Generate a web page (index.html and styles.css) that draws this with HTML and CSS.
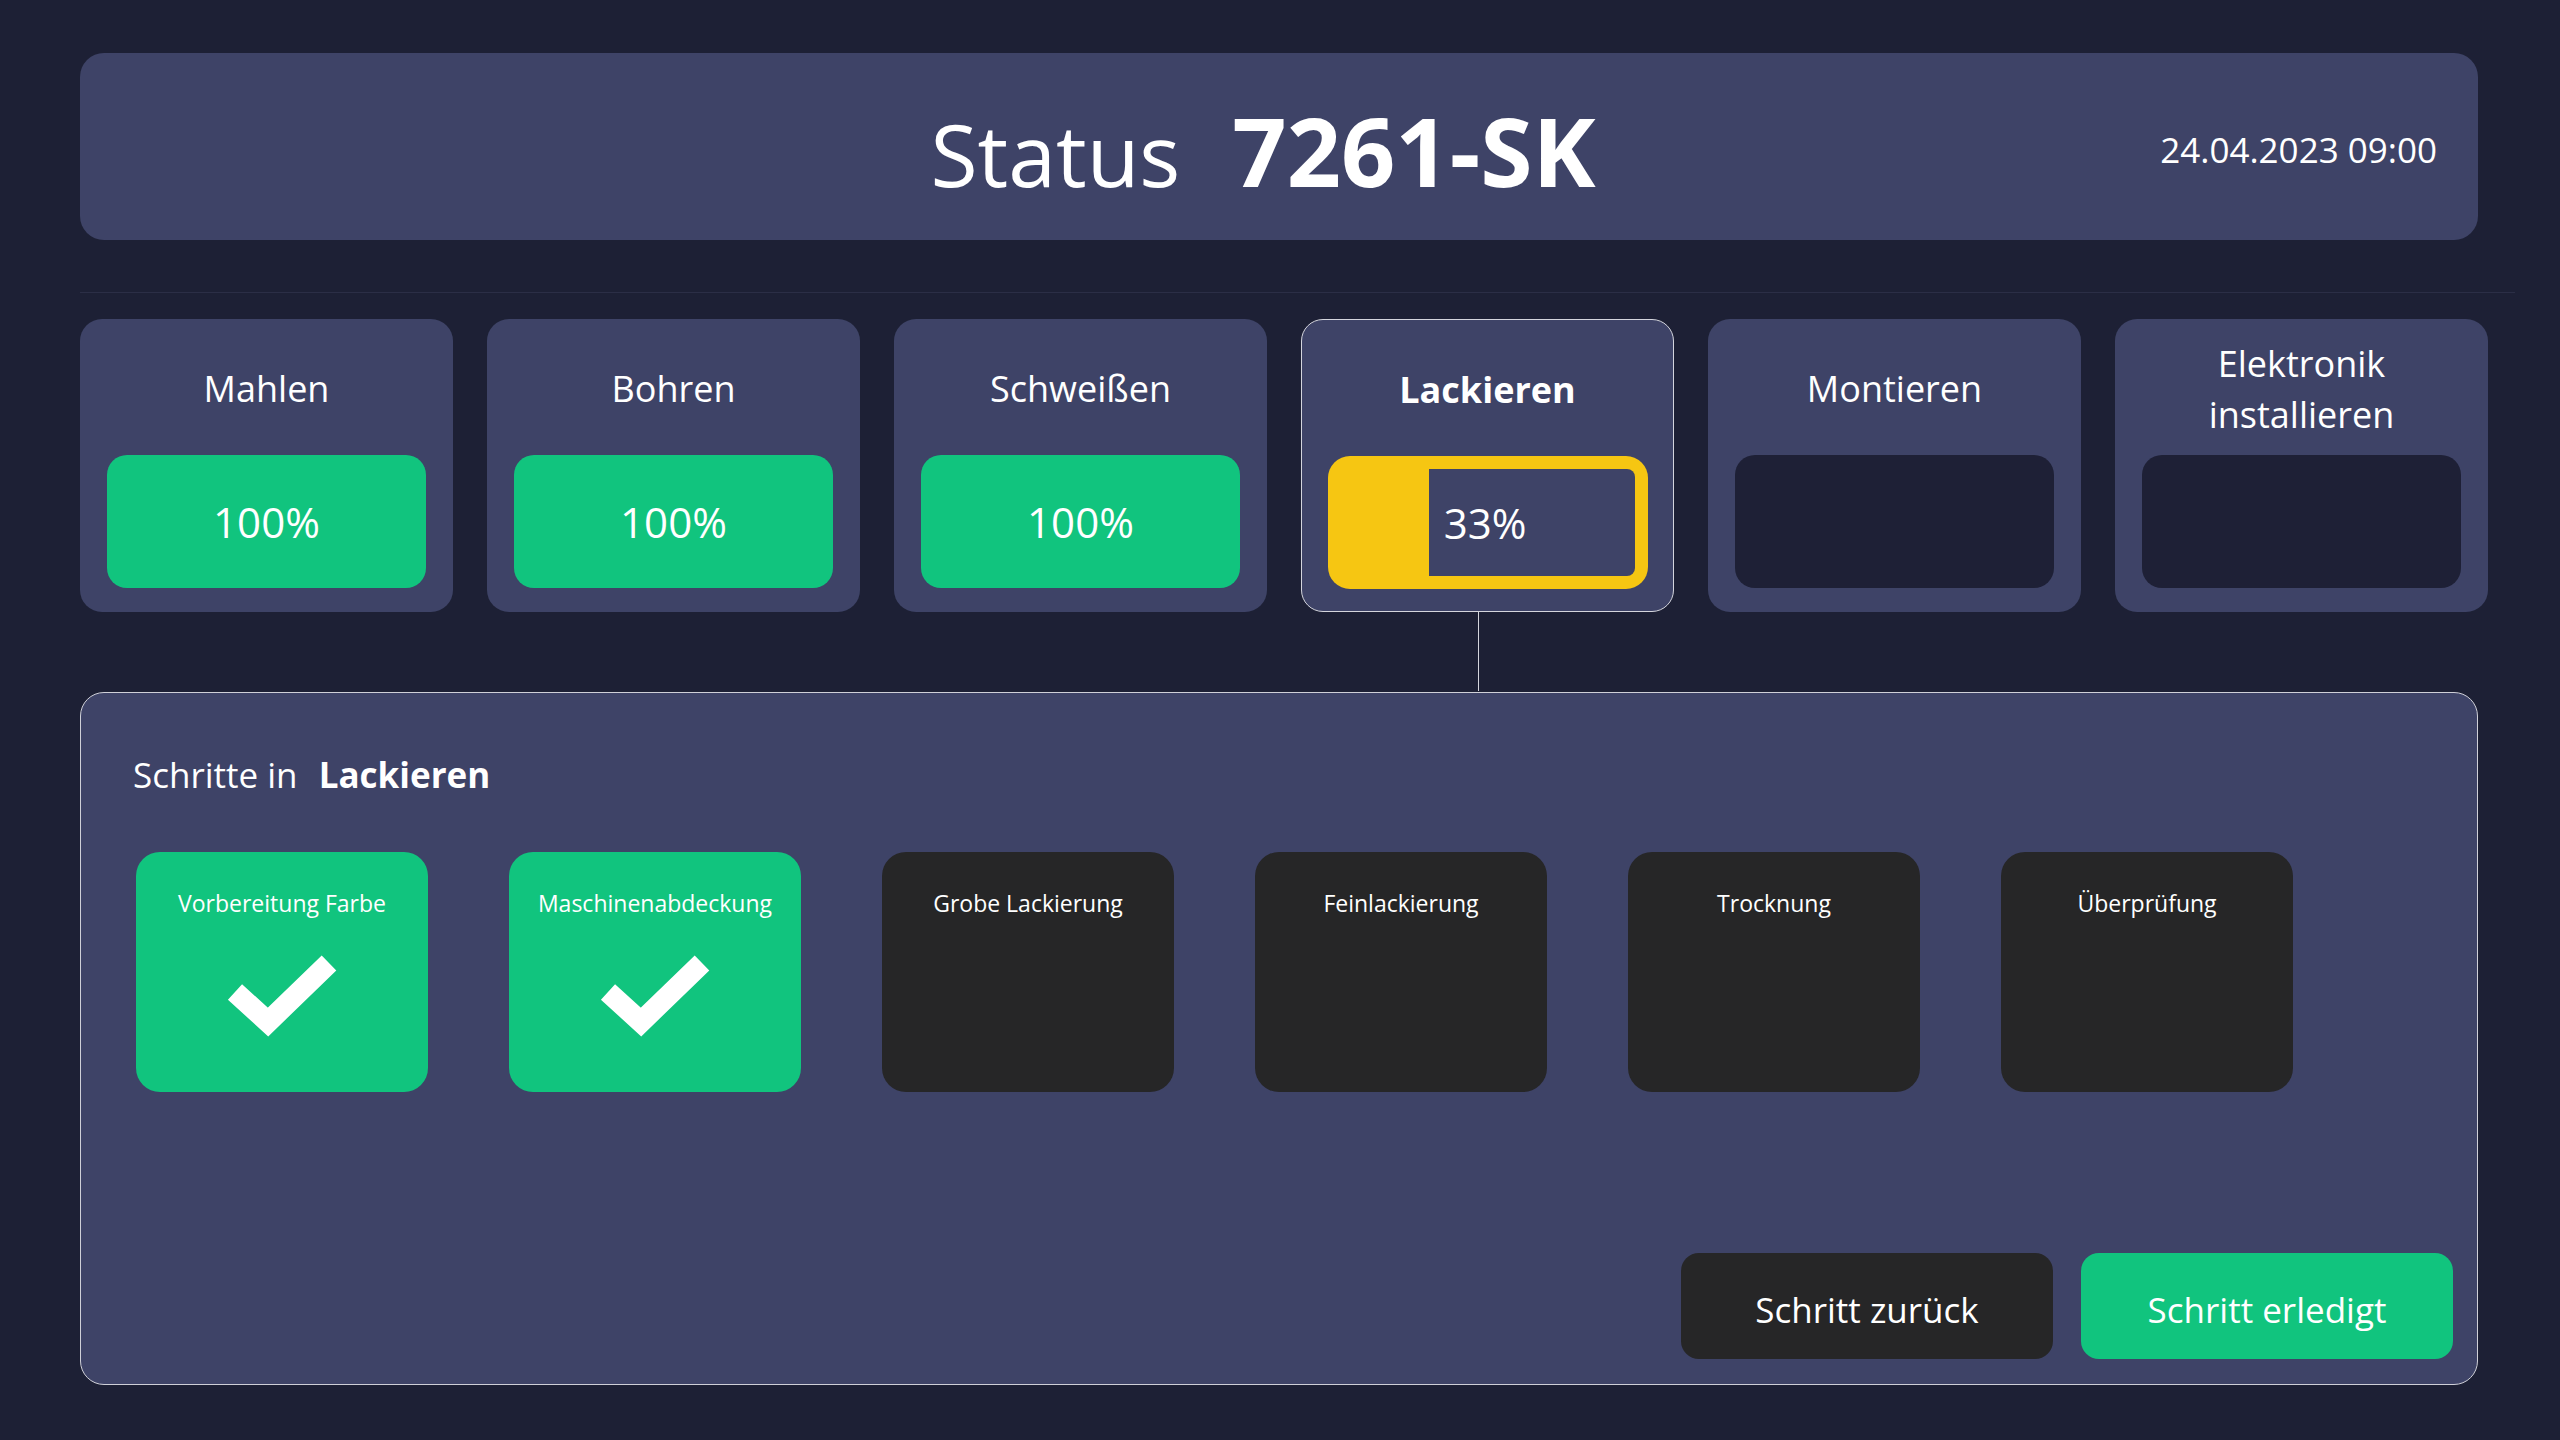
FILE: index.html
```html
<!DOCTYPE html>
<html lang="de">
<head>
<meta charset="utf-8">
<title>Status 7261-SK</title>
<link rel="stylesheet" href="styles.css">
</head>
<body>
<div class="page">
  <header class="header">
    <div class="spacer"></div>
    <h1 class="title"><span class="title-label">Status</span><span class="title-id">7261-SK</span></h1>
    <div class="date">24.04.2023 09:00</div>
  </header>

  <div class="divider"></div>

  <section class="stations">
    <div class="station">
      <div class="station-name">Mahlen</div>
      <div class="bar done">100%</div>
    </div>
    <div class="station">
      <div class="station-name">Bohren</div>
      <div class="bar done">100%</div>
    </div>
    <div class="station">
      <div class="station-name">Schweißen</div>
      <div class="bar done">100%</div>
    </div>
    <div class="station active">
      <div class="station-name">Lackieren</div>
      <div class="bar partial">
        <div class="bar-fill" style="width:33%"></div>
        <div class="bar-rest">33%</div>
      </div>
    </div>
    <div class="station">
      <div class="station-name">Montieren</div>
      <div class="bar empty"></div>
    </div>
    <div class="station">
      <div class="station-name">Elektronik<br>installieren</div>
      <div class="bar empty"></div>
    </div>
  </section>

  <section class="panel">
    <h2 class="panel-title">Schritte in <span class="panel-title-strong">Lackieren</span></h2>
    <div class="steps">
      <div class="step done">
        <div class="step-name">Vorbereitung Farbe</div>
        <svg class="check" width="120" height="90" viewBox="0 0 120 90"><polyline points="13,45 46,75 107,16" fill="none" stroke="#ffffff" stroke-width="21" stroke-linejoin="miter" stroke-linecap="butt"/></svg>
      </div>
      <div class="step done">
        <div class="step-name">Maschinenabdeckung</div>
        <svg class="check" width="120" height="90" viewBox="0 0 120 90"><polyline points="13,45 46,75 107,16" fill="none" stroke="#ffffff" stroke-width="21" stroke-linejoin="miter" stroke-linecap="butt"/></svg>
      </div>
      <div class="step">
        <div class="step-name">Grobe Lackierung</div>
      </div>
      <div class="step">
        <div class="step-name">Feinlackierung</div>
      </div>
      <div class="step">
        <div class="step-name">Trocknung</div>
      </div>
      <div class="step">
        <div class="step-name">Überprüfung</div>
      </div>
    </div>
    <div class="actions">
      <button class="btn btn-back">Schritt zurück</button>
      <button class="btn btn-done">Schritt erledigt</button>
    </div>
  </section>
</div>
</body>
</html>
```

FILE: styles.css
```css
* { box-sizing: border-box; }

html, body {
  margin: 0;
  padding: 0;
}

body {
  width: 2560px;
  height: 1440px;
  background: #1d2035;
  color: #ffffff;
  font-family: "Open Sans", "Noto Sans", sans-serif;
  overflow: hidden;
}

.page {
  padding: 53px 0 0 80px;
}

/* Header */
.header {
  width: 2398px;
  height: 187px;
  background: #3e4367;
  border-radius: 24px;
  display: grid;
  grid-template-columns: 1fr auto 1fr;
  align-items: center;
  padding: 6px 41px 0 41px;
}

.title {
  margin: 0 32px 0 0;
  font-weight: 400;
  display: flex;
  align-items: baseline;
  gap: 52px;
  line-height: 1.2;
}

.title-label {
  font-size: 86px;
  font-weight: 400;
}

.title-id {
  font-size: 95px;
  font-weight: 700;
}

.date {
  justify-self: end;
  font-size: 35px;
  line-height: 1.2;
}

.divider {
  margin-top: 52px;
  width: 2435px;
  height: 1px;
  background: #2b2e46;
}

/* Stations */
.stations {
  margin-top: 26px;
  display: grid;
  grid-template-columns: repeat(6, 373px);
  column-gap: 34px;
}

.station {
  position: relative;
  height: 293px;
  background: #3e4367;
  border-radius: 22px;
  display: flex;
  flex-direction: column;
  padding: 0 27px 24px 27px;
}

.station.active {
  border: 1.5px solid #d4d5dd;
  padding: 0 25.5px 22.5px 25.5px;
}

.station.active::after {
  content: "";
  position: absolute;
  top: 100%;
  left: calc(50% - 10px);
  width: 1.5px;
  height: 80px;
  background: #d4d5dd;
}

.station-name {
  flex: 1;
  display: flex;
  align-items: center;
  justify-content: center;
  text-align: center;
  font-size: 36px;
  line-height: 51px;
  padding-top: 3px;
}

.station.active .station-name {
  font-weight: 700;
}

.bar {
  height: 133px;
  border-radius: 20px;
  display: flex;
  align-items: center;
  justify-content: center;
  font-size: 42px;
}

.bar.done {
  background: #11c47e;
}

.bar.empty {
  background: #1e2036;
}

.bar.partial {
  background: #f6c612;
  padding: 13px 13px 13px 0;
  align-items: stretch;
  justify-content: flex-start;
  border-radius: 22px;
}

.bar-fill {
  flex: none;
}

.bar-rest {
  flex: 1;
  background: #3e4367;
  border-radius: 0 8px 8px 0;
  display: flex;
  align-items: center;
  padding-left: 15px;
}

/* Panel */
.panel {
  margin-top: 80px;
  width: 2398px;
  height: 693px;
  background: #3e4367;
  border: 1.5px solid #cfd0d8;
  border-radius: 24px;
  display: flex;
  flex-direction: column;
  padding: 55px 24px 25px 52px;
}

.panel-title {
  margin: 0;
  font-size: 35px;
  font-weight: 400;
  line-height: 50px;
  padding-top: 2px;
}

.panel-title-strong {
  font-weight: 700;
  margin-left: 12px;
}

.steps {
  margin-top: 52px;
  margin-left: 3px;
  display: flex;
  gap: 81px;
}

.step {
  width: 292px;
  height: 240px;
  border-radius: 24px;
  background: #262627;
  display: flex;
  flex-direction: column;
  align-items: center;
  padding-top: 35px;
}

.step.done {
  background: #11c47e;
}

.step-name {
  font-size: 23px;
  line-height: 32px;
  text-align: center;
}

.check {
  display: block;
  margin-top: 28px;
}

.actions {
  margin-top: auto;
  align-self: flex-end;
  display: flex;
  gap: 28px;
}

.btn {
  width: 372px;
  height: 106px;
  border: none;
  border-radius: 18px;
  color: #ffffff;
  font-family: "Open Sans", "Noto Sans", sans-serif;
  font-size: 35px;
  display: flex;
  align-items: center;
  justify-content: center;
  padding: 6px 0 0 0;
}

.btn-back {
  background: #262627;
}

.btn-done {
  background: #11c47e;
}
```
